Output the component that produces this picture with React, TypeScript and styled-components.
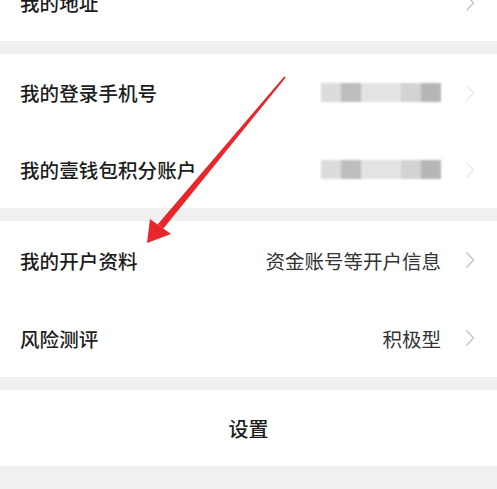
import styled, { createGlobalStyle } from "styled-components";

const GlobalStyle = createGlobalStyle`
  html, body {
    margin: 0;
    padding: 0;
    background: #f0f0f0;
    overflow: hidden;
  }
  body {
    font-family: "Noto Sans CJK SC", "Noto Sans", sans-serif;
    -webkit-font-smoothing: antialiased;
  }
`;

const Page = styled.div`
  position: relative;
  width: 497px;
  height: 489px;
  overflow: hidden;
  display: flex;
  flex-direction: column;
  gap: 13px;
`;

const Group = styled.section<{ $shift?: number }>`
  background: #fff;
  display: flex;
  flex-direction: column;
  margin-top: ${(p) => (p.$shift ? `-${p.$shift}px` : "0")};
`;

const Row = styled.div<{ $h?: number }>`
  height: ${(p) => p.$h ?? 77}px;
  display: flex;
  align-items: center;
  padding: 0 22px 0 20px;
  gap: 24px;
`;

const Label = styled.span`
  flex: 1;
  font-size: 19.5px;
  font-weight: 500;
  color: #1c1c1c;
  letter-spacing: 0.1px;
`;

const Value = styled.span`
  font-size: 19.5px;
  color: #333;
`;

const Masked = styled.div`
  width: 120px;
  height: 19px;
  display: flex;
  filter: blur(1px);
`;

const Tile = styled.div<{ $w: number; $c: string }>`
  width: ${(p) => p.$w}px;
  background: ${(p) => p.$c};
`;

const Chevron = styled.svg<{ $faint?: boolean }>`
  width: 10px;
  height: 18px;
  flex: none;
  opacity: ${(p) => (p.$faint ? 0.35 : 1)};
`;

const Centered = styled.div`
  height: 76px;
  display: flex;
  align-items: center;
  justify-content: center;
  font-size: 20px;
  font-weight: 500;
  color: #1c1c1c;
`;

const Pointer = styled.svg`
  position: absolute;
  left: 0;
  top: 0;
  pointer-events: none;
`;

const Arrow = ({ faint }: { faint?: boolean }) => (
  <Chevron $faint={faint} viewBox="0 0 10 18">
    <path d="M1.5 1.5 L8.5 9 L1.5 16.5" fill="none" stroke="#c6c6c6" strokeWidth="1.4" />
  </Chevron>
);

const tiles: [number, string][] = [
  [20, "#dcdcdc"],
  [20, "#bdbdbd"],
  [40, "#e3e3e3"],
  [20, "#d3d3d3"],
  [20, "#b6b6b6"],
];

const MaskedValue = () => (
  <Masked>
    {tiles.map(([w, c], i) => (
      <Tile key={i} $w={w} $c={c} />
    ))}
  </Masked>
);

export default function App() {
  return (
    <Page>
      <GlobalStyle />
      <Group $shift={36}>
        <Row>
          <Label>我的地址</Label>
          <Arrow />
        </Row>
      </Group>

      <Group>
        <Row>
          <Label>我的登录手机号</Label>
          <MaskedValue />
          <Arrow faint />
        </Row>
        <Row>
          <Label>我的壹钱包积分账户</Label>
          <MaskedValue />
          <Arrow faint />
        </Row>
      </Group>

      <Group>
        <Row $h={78}>
          <Label>我的开户资料</Label>
          <Value>资金账号等开户信息</Value>
          <Arrow />
        </Row>
        <Row $h={78}>
          <Label>风险测评</Label>
          <Value>积极型</Value>
          <Arrow />
        </Row>
      </Group>

      <Group>
        <Centered>设置</Centered>
      </Group>

      {/* red annotation arrow over the list */}
      <Pointer width="497" height="489" viewBox="0 0 497 489">
        <polygon
          points="285.8,77.6 284.2,76.4 157.8,224.3 163.2,228.7"
          fill="#e8262b"
        />
        <polygon points="147,243 150,219 171,234" fill="#e8262b" />
      </Pointer>
    </Page>
  );
}
